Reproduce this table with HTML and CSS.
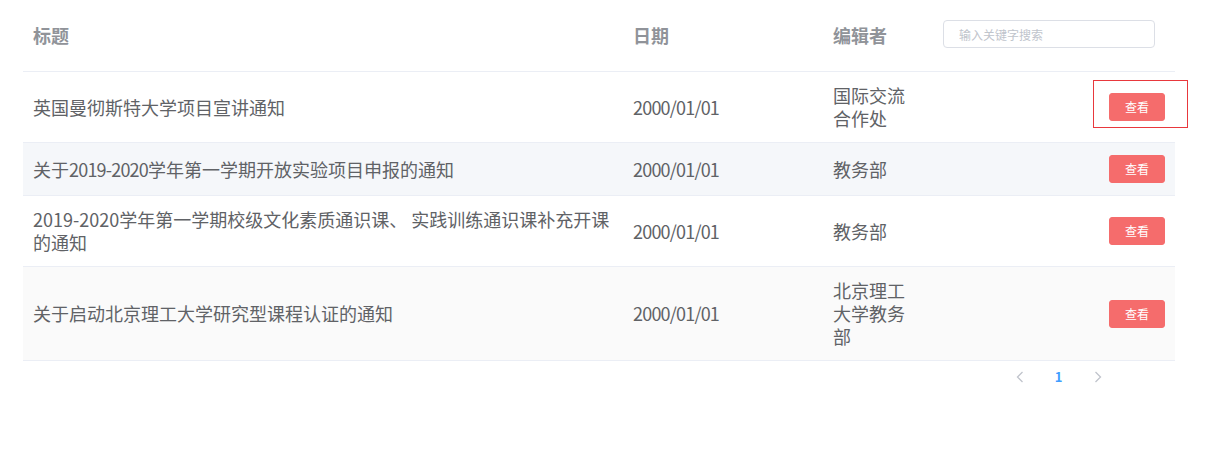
FILE: index.html
```html
<!DOCTYPE html>
<html lang="zh-CN">
<head>
  <meta charset="UTF-8" />
  <meta name="viewport" content="width=device-width, initial-scale=1.0"/>
  <title>通知列表</title>
  <link rel="stylesheet" href="styles.css">
</head>
<body>
  <main class="page">
    <!-- Notice table -->
    <table class="notice-table">
      <colgroup>
        <col class="col-title">
        <col class="col-date">
        <col class="col-editor">
        <col class="col-ops">
      </colgroup>
      <thead>
        <tr>
          <th><div class="cell label">标题</div></th>
          <th><div class="cell label">日期</div></th>
          <th><div class="cell label">编辑者</div></th>
          <th><div class="cell"><input class="search" type="text" placeholder="输入关键字搜索"></div></th>
        </tr>
      </thead>
      <tbody>
        <tr>
          <td><div class="cell">英国曼彻斯特大学项目宣讲通知</div></td>
          <td><div class="cell num">2000/01/01</div></td>
          <td><div class="cell editor">国际交流合作处</div></td>
          <td>
            <div class="cell ops">
              <span class="btn-wrap">
                <button class="btn-view">查看</button>
                <span class="focus-box"></span>
              </span>
            </div>
          </td>
        </tr>
        <tr class="hover">
          <td><div class="cell">关于<span class="num">2019-2020</span>学年第一学期开放实验项目申报的通知</div></td>
          <td><div class="cell num">2000/01/01</div></td>
          <td><div class="cell editor">教务部</div></td>
          <td><div class="cell ops"><button class="btn-view">查看</button></div></td>
        </tr>
        <tr>
          <td><div class="cell">2019-2020学年第一学期校级文化素质通识课、 实践训练通识课补充开课的通知</div></td>
          <td><div class="cell num">2000/01/01</div></td>
          <td><div class="cell editor">教务部</div></td>
          <td><div class="cell ops"><button class="btn-view">查看</button></div></td>
        </tr>
        <tr class="striped">
          <td><div class="cell">关于启动北京理工大学研究型课程认证的通知</div></td>
          <td><div class="cell num">2000/01/01</div></td>
          <td><div class="cell editor">北京理工大学教务部</div></td>
          <td><div class="cell ops"><button class="btn-view">查看</button></div></td>
        </tr>
      </tbody>
    </table>

    <!-- Pagination -->
    <div class="pagination">
      <button class="page-btn" disabled>
        <svg width="8" height="12" viewBox="0 0 8 12"><path d="M6.5 1 L1.5 6 L6.5 11" fill="none" stroke="currentColor" stroke-width="1.3"/></svg>
      </button>
      <span class="page-num">1</span>
      <button class="page-btn" disabled>
        <svg width="8" height="12" viewBox="0 0 8 12"><path d="M1.5 1 L6.5 6 L1.5 11" fill="none" stroke="currentColor" stroke-width="1.3"/></svg>
      </button>
    </div>
  </main>
</body>
</html>
```

FILE: styles.css
```css
body {
  margin: 0;
  font-family: "Noto Sans CJK SC", "Noto Sans", sans-serif;
  background: #fff;
  color: #606266;
}

.page {
  padding: 0 23px;
}

.notice-table {
  width: 1152px;
  table-layout: fixed;
  border-collapse: collapse;
  font-size: 18px;
}

.col-title { width: 600px; }
.col-date { width: 200px; }
.col-editor { width: 110px; }
.col-ops { width: 242px; }

th, td {
  padding: 12px 0;
  border-bottom: 1px solid #ebeef5;
  text-align: left;
}

th {
  padding: 20px 0 23px;
  vertical-align: top;
  color: #909399;
  font-weight: bold;
}

td {
  vertical-align: middle;
}

.cell {
  padding: 0 10px;
  line-height: 23px;
  word-break: break-all;
}

.num {
  letter-spacing: -0.8px;
}

.label {
  padding-top: 4px;
}

.editor {
  padding-right: 12px;
}

.ops {
  text-align: right;
  line-height: 0;
}

tr.hover td {
  background: #f5f7fa;
}

tr.striped td {
  background: #fafafa;
}

.search {
  display: block;
  box-sizing: border-box;
  width: 212px;
  height: 28px;
  padding: 0 15px;
  border: 1px solid #dcdfe6;
  border-radius: 4px;
  font-family: inherit;
  font-size: 12px;
  color: #606266;
  outline: none;
}

.search::placeholder {
  color: #c0c4cc;
}

.btn-wrap {
  position: relative;
  display: inline-block;
}

.btn-view {
  display: inline-block;
  box-sizing: border-box;
  height: 28px;
  padding: 7px 15px;
  border: 1px solid #f56c6c;
  border-radius: 3px;
  background: #f56c6c;
  color: #fff;
  font-family: inherit;
  font-size: 12px;
  line-height: 12px;
  cursor: pointer;
}

.focus-box {
  position: absolute;
  left: -16px;
  top: -13px;
  width: 95px;
  height: 48px;
  box-sizing: border-box;
  border: 1px solid #e8383d;
}

.pagination {
  display: flex;
  justify-content: flex-end;
  align-items: center;
  width: 1152px;
  height: 28px;
  margin-top: 2px;
  padding-right: 58px;
  box-sizing: border-box;
}

.page-btn {
  width: 39px;
  height: 28px;
  padding: 0;
  border: none;
  background: none;
  color: #c0c4cc;
  display: flex;
  align-items: center;
  justify-content: center;
}

.page-num {
  width: 39px;
  text-align: center;
  font-size: 13px;
  font-weight: 600;
  color: #409eff;
  line-height: 28px;
}
```
